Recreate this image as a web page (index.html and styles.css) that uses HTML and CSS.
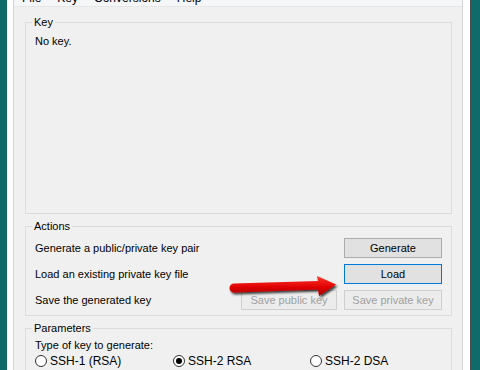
FILE: index.html
```html
<!DOCTYPE html>
<html lang="en">
<head>
  <meta charset="UTF-8" />
  <title>PuTTY Key Generator</title>
  <link rel="stylesheet" href="styles.css">
</head>
<body>

  <div class="frame">
    <div class="client">

      <nav class="menubar">
        <span>File</span>
        <span>Key</span>
        <span>Conversions</span>
        <span>Help</span>
      </nav>

      <fieldset class="group group-key">
        <legend>Key</legend>
        <p>No key.</p>
      </fieldset>

      <fieldset class="group group-actions">
        <legend>Actions</legend>
        <div class="action-row">
          <span class="action-label">Generate a public/private key pair</span>
          <button class="btn">Generate</button>
        </div>
        <div class="action-row">
          <span class="action-label">Load an existing private key file</span>
          <button class="btn btn-focus">Load</button>
        </div>
        <div class="action-row">
          <span class="action-label">Save the generated key</span>
          <div class="btn-pair">
            <button class="btn btn-small" disabled>Save public key</button>
            <button class="btn" disabled>Save private key</button>
          </div>
        </div>

        <!-- annotation arrow pointing at Load -->
        <svg class="arrow" width="114" height="32" viewBox="0 0 114 32">
          <defs>
            <linearGradient id="red" x1="0" y1="0" x2="0" y2="1">
              <stop offset="0" stop-color="#ff3b2f"/>
              <stop offset="0.55" stop-color="#e00000"/>
              <stop offset="1" stop-color="#a80000"/>
            </linearGradient>
            <filter id="shade" x="-10%" y="-30%" width="130%" height="180%">
              <feDropShadow dx="1.5" dy="2" stdDeviation="1.2" flood-color="#000" flood-opacity="0.75"/>
            </filter>
          </defs>
          <path d="M7,12.5 L91,10 L90,5 L109,13.5 L92,25 L91,18.5 L7,21.5 A4.5,4.5 0 0 1 7,12.5 Z"
                fill="url(#red)" filter="url(#shade)"/>
        </svg>
      </fieldset>

      <fieldset class="group group-params">
        <legend>Parameters</legend>
        <p>Type of key to generate:</p>
        <div class="radio-row">
          <label class="radio"><span class="dot"></span>SSH-1 (RSA)</label>
          <label class="radio"><span class="dot checked"></span>SSH-2 RSA</label>
          <label class="radio"><span class="dot"></span>SSH-2 DSA</label>
        </div>
      </fieldset>

    </div>
  </div>

</body>
</html>
```

FILE: styles.css
```css
* {
  margin: 0;
  padding: 0;
  box-sizing: border-box;
}

body {
  background: #0f6b69;
  font-family: 'Liberation Sans', Arial, sans-serif;
  font-size: 11px;
  color: #000;
  height: 370px;
  overflow: hidden;
}

.frame {
  margin-left: 7px;
  width: 464px;
  height: 370px;
  background: #fff;
  padding: 0 7px 0 6px;
  border-right: 1px solid #4a4a4a;
}

.client {
  height: 100%;
  background: #f0f0f0;
  border-left: 1px solid #d4d4d4;
  border-right: 1px solid #d4d4d4;
  overflow: hidden;
}

.menubar {
  display: flex;
  gap: 16px;
  height: 18px;
  margin-top: -11px;
  padding: 0 8px;
  line-height: 18px;
  background: #f5f6f7;
  border-bottom: 1px solid #e6e6e6;
  font-size: 12px;
}

.group {
  position: relative;
  margin: 0 10px 0 11px;
  border: 1px solid #dcdcdc;
  padding: 0 9px;
}

.group legend {
  padding: 0 2px;
  margin-left: -3px;
  line-height: 14px;
}

.group p {
  line-height: 14px;
}

.group-key {
  margin-top: 8px;
  height: 199px;
}

.group-key p {
  margin-top: 5px;
}

.group-actions {
  margin-top: 5px;
  padding-top: 5px;
  padding-bottom: 5px;
}

.action-row {
  display: flex;
  align-items: center;
  justify-content: space-between;
  height: 20px;
}

.action-row + .action-row {
  margin-top: 6px;
}

.btn-pair {
  display: flex;
  gap: 7px;
}

.btn {
  width: 98px;
  height: 20px;
  font-family: inherit;
  font-size: 11px;
  color: #000;
  background: #e1e1e1;
  border: 1px solid #adadad;
}

.btn-small {
  width: 96px;
}

.btn-focus {
  border-color: #0078d7;
}

.btn:disabled {
  color: #a0a0a0;
  background: #ececec;
  border-color: #cfcfcf;
}

.arrow {
  position: absolute;
  left: 201px;
  top: 38px;
}

.group-params {
  margin-top: 5px;
  height: 80px;
}

.group-params p {
  margin-top: 3px;
}

.radio-row {
  display: grid;
  grid-template-columns: 138px 137px 1fr;
  margin-top: 2px;
  line-height: 14px;
  font-size: 12px;
}

.radio {
  display: flex;
  align-items: center;
  gap: 3px;
}

.dot {
  width: 12px;
  height: 12px;
  border-radius: 50%;
  border: 1px solid #333;
  background: #fff;
  display: inline-flex;
  align-items: center;
  justify-content: center;
}

.dot.checked::after {
  content: "";
  width: 6px;
  height: 6px;
  border-radius: 50%;
  background: #000;
}
```
